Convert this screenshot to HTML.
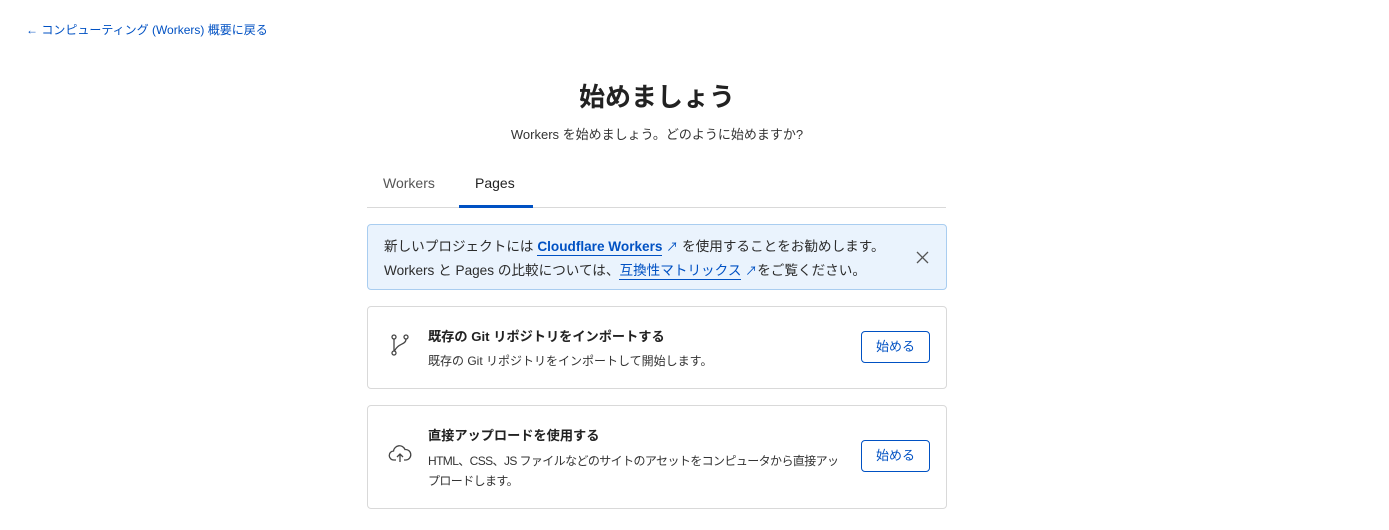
<!DOCTYPE html>
<html><head><meta charset="utf-8"><style>
*{box-sizing:border-box;margin:0;padding:0}
body{width:1389px;height:530px;background:#fff;font-family:"Liberation Sans","Noto Sans CJK JP",sans-serif;color:#313131;position:relative;overflow:hidden}
.abs{position:absolute}
a{color:#0051c3}
.back{left:26px;top:21px;font-size:12px;color:#0051c3;white-space:nowrap}
h1{position:absolute;left:0;width:1314px;text-align:center;top:77px;font-size:26px;font-weight:700;color:#222}
.sub{left:0;width:1314px;text-align:center;top:124px;font-size:13px;color:#333}
.tab{top:175px;font-size:14px}
.line{left:367px;top:207px;width:579px;height:1px;background:#d9d9d9}
.ul{left:459px;top:205px;width:74px;height:3px;background:#0051c3}
.banner{left:367px;top:224px;width:580px;height:66px;background:#eaf3fd;border:1px solid #a9cdf0;border-radius:4px}
.bt{left:16px;font-size:13.6px;white-space:nowrap;color:#2c2c2c}
.bt a{text-decoration:none;border-bottom:1px solid #0051c3;padding-bottom:1px}
.card{left:367px;width:580px;border:1px solid #d9d9d9;border-radius:4px}
.ct{left:60px;font-size:13.2px;font-weight:700;color:#222;white-space:nowrap}
.cs{left:60px;font-size:12px;color:#333;line-height:20px}
.btn{left:493px;width:69px;height:32px;border:1px solid #0051c3;border-radius:4px;color:#0051c3;font-size:13px;text-align:center;line-height:30px}
</style></head><body>
<div class="abs back">← コンピューティング (Workers) 概要に戻る</div>
<h1>始めましょう</h1>
<div class="abs sub">Workers を始めましょう。どのように始めますか?</div>
<div class="abs tab" style="left:383px;color:#555">Workers</div>
<div class="abs tab" style="left:475px;color:#222;font-weight:500">Pages</div>
<div class="abs line"></div><div class="abs ul"></div>
<div class="abs banner">
<div class="abs bt" style="top:10px">新しいプロジェクトには <a style="font-weight:700">Cloudflare Workers</a> <span style="color:#0051c3;font-size:12px">↗</span> を使用することをお勧めします。</div>
<div class="abs bt" style="top:34px">Workers と Pages の比較については、<a>互換性マトリックス</a> <span style="color:#0051c3;font-size:12px">↗</span>をご覧ください。</div>
<svg class="abs" style="left:548px;top:26px" width="13" height="13" viewBox="0 0 13 13"><path d="M1 1L12 12M12 1L1 12" stroke="#555" stroke-width="1.3"/></svg>
</div>
<div class="abs card" style="top:306px;height:83px">
<svg class="abs" style="left:22px;top:27px" width="20" height="22" viewBox="0 0 20 22" fill="none" stroke="#444" stroke-width="1.3"><circle cx="4" cy="3" r="2"/><circle cx="16" cy="3" r="2"/><circle cx="4" cy="19" r="2"/><path d="M4 5V17M16 5C16 11 8 9 4.5 17"/></svg>
<div class="abs ct" style="top:19px">既存の Git リポジトリをインポートする</div>
<div class="abs cs" style="top:44px">既存の Git リポジトリをインポートして開始します。</div>
<div class="abs btn" style="top:24px">始める</div>
</div>
<div class="abs card" style="top:405px;height:104px">
<svg class="abs" style="left:20px;top:38px" width="24" height="20" viewBox="0 0 24 20" fill="none" stroke="#444" stroke-width="1.3"><path d="M8 16H6A4.5 4.5 0 0 1 5.5 7A6 6 0 0 1 17 5.5A4.5 4.5 0 0 1 18 16H16"/><path d="M12 18V10M9 13L12 10L15 13"/></svg>
<div class="abs ct" style="top:19px">直接アップロードを使用する</div>
<div class="abs cs" style="top:45px;width:416px;word-break:break-all;letter-spacing:-0.6px">HTML、CSS、JS ファイルなどのサイトのアセットをコンピュータから直接アップロードします。</div>
<div class="abs btn" style="top:34px">始める</div>
</div>
</body></html>
